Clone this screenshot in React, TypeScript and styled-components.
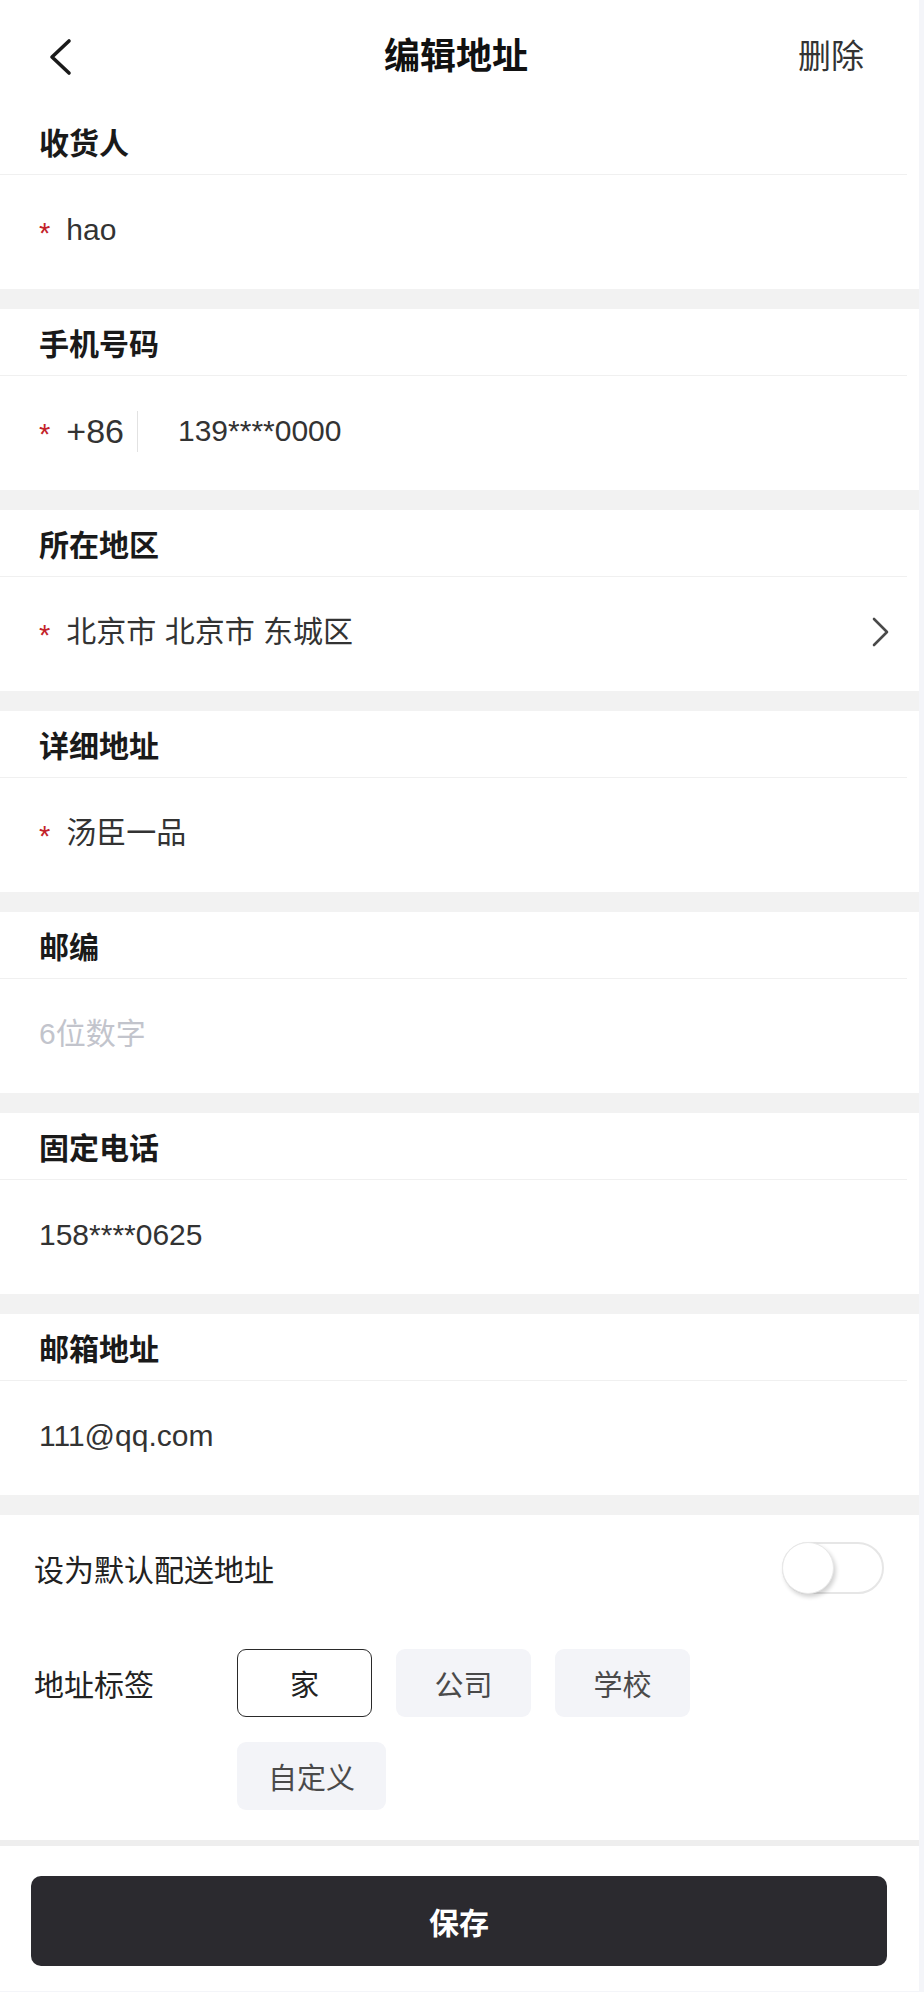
import React from "react";
import styled, { createGlobalStyle } from "styled-components";

type Field = {
  label: string;
  value: string;
  required?: boolean;
  placeholder?: boolean;
  areaCode?: string;
  arrow?: boolean;
};

const fields: Field[] = [
  { label: "收货人", value: "hao", required: true },
  { label: "手机号码", value: "139****0000", required: true, areaCode: "+86" },
  { label: "所在地区", value: "北京市 北京市 东城区", required: true, arrow: true },
  { label: "详细地址", value: "汤臣一品", required: true },
  { label: "邮编", value: "6位数字", placeholder: true },
  { label: "固定电话", value: "158****0625" },
  { label: "邮箱地址", value: "111@qq.com" },
];

const tags = ["家", "公司", "学校", "自定义"];

const App = () => {
  return (
    <>
      <GlobalStyle />
      <Page>
        <Header>
          <BackButton>
            <svg width="26" height="40" viewBox="0 0 26 40">
              <polyline
                points="21,4 4,20 21,36"
                fill="none"
                stroke="#1a1a1a"
                strokeWidth="3.6"
                strokeLinecap="round"
                strokeLinejoin="round"
              />
            </svg>
          </BackButton>
          <Title>编辑地址</Title>
          <DeleteText>删除</DeleteText>
        </Header>

        {fields.map((f) => (
          <FieldSection key={f.label}>
            <FieldLabel>{f.label}</FieldLabel>
            <FieldRow>
              {f.required && <Asterisk>*</Asterisk>}
              {f.areaCode && <AreaCode>{f.areaCode}</AreaCode>}
              <ValueText $placeholder={f.placeholder}>{f.value}</ValueText>
              {f.arrow && (
                <svg width="20" height="32" viewBox="0 0 20 32">
                  <polyline
                    points="3,3 16,16 3,29"
                    fill="none"
                    stroke="#4a4a4a"
                    strokeWidth="2.6"
                    strokeLinecap="round"
                    strokeLinejoin="round"
                  />
                </svg>
              )}
            </FieldRow>
          </FieldSection>
        ))}

        <SettingsBlock>
          <SwitchRow>
            <SettingText>设为默认配送地址</SettingText>
            <Toggle>
              <Knob />
            </Toggle>
          </SwitchRow>
          <TagRow>
            <TagLabel>地址标签</TagLabel>
            <TagGrid>
              {tags.map((t, i) => (
                <Tag key={t} $active={i === 0}>
                  {t}
                </Tag>
              ))}
            </TagGrid>
          </TagRow>
        </SettingsBlock>

        <Footer>
          <SaveButton>保存</SaveButton>
        </Footer>
      </Page>
    </>
  );
};

export default App;

const GlobalStyle = createGlobalStyle`
  html, body {
    margin: 0;
    padding: 0;
    background: #f4f5f9;
  }
  body {
    font-family: "Liberation Sans", "Noto Sans CJK SC", sans-serif;
    -webkit-font-smoothing: antialiased;
  }
`;

const Page = styled.div`
  width: 919px;
  background: #f2f2f2;
  display: flex;
  flex-direction: column;
`;

const Header = styled.div`
  height: 108px;
  box-sizing: border-box;
  padding: 5px 55px 0 48px;
  background: #ffffff;
  display: grid;
  grid-template-columns: 1fr auto 1fr;
  align-items: center;
`;

const BackButton = styled.div`
  justify-self: start;
  display: flex;
  align-items: center;
`;

const Title = styled.div`
  font-size: 36px;
  font-weight: 700;
  color: #111111;
  line-height: 1.2;
`;

const DeleteText = styled.div`
  justify-self: end;
  font-size: 33px;
  color: #333333;
  line-height: 1.2;
`;

const FieldSection = styled.div`
  background: #ffffff;
  margin-bottom: 20px;
`;

const FieldLabel = styled.div`
  height: 66px;
  margin-right: 12px;
  padding-left: 39px;
  border-bottom: 1px solid #f0f0f0;
  display: flex;
  align-items: center;
  font-size: 30px;
  font-weight: 700;
  color: #1a1a1a;
`;

const FieldRow = styled.div`
  height: 114px;
  box-sizing: border-box;
  padding: 0 28px 4px 39px;
  display: flex;
  align-items: center;
`;

const Asterisk = styled.span`
  font-size: 29px;
  color: #c3222a;
  margin-right: 16px;
  line-height: 1;
  align-self: center;
  margin-top: 6px;
`;

const AreaCode = styled.span`
  font-size: 34px;
  color: #333333;
  line-height: 41px;
  padding-right: 13px;
  border-right: 1px solid #e2e2e2;
  margin-right: 40px;
`;

const ValueText = styled.span<{ $placeholder?: boolean }>`
  flex: 1;
  font-size: 30px;
  line-height: 1.2;
  color: ${(p) => (p.$placeholder ? "#c2c4cc" : "#333333")};
`;

const SettingsBlock = styled.div`
  background: #ffffff;
  padding: 27px 35px 30px 34px;
`;

const SwitchRow = styled.div`
  display: flex;
  justify-content: space-between;
  align-items: center;
  height: 52px;
`;

const SettingText = styled.span`
  font-size: 30px;
  color: #222222;
`;

const Toggle = styled.div`
  width: 102px;
  height: 52px;
  box-sizing: border-box;
  border: 2px solid #e6e6e6;
  border-radius: 26px;
  background: #ffffff;
  display: flex;
  align-items: center;
`;

const Knob = styled.div`
  width: 52px;
  height: 52px;
  margin-left: -2px;
  box-sizing: border-box;
  border-radius: 50%;
  border: 1px solid #e8e8e8;
  background: #ffffff;
  box-shadow: 2px 3px 4px rgba(0, 0, 0, 0.18);
`;

const TagRow = styled.div`
  display: flex;
  margin-top: 55px;
`;

const TagLabel = styled.div`
  width: 203px;
  height: 68px;
  flex-shrink: 0;
  display: flex;
  align-items: center;
  font-size: 30px;
  color: #222222;
`;

const TagGrid = styled.div`
  display: flex;
  flex-wrap: wrap;
  gap: 25px 24px;
  max-width: 480px;
`;

const Tag = styled.div<{ $active?: boolean }>`
  min-width: 135px;
  height: 68px;
  padding: 0 30px;
  box-sizing: border-box;
  border-radius: 9px;
  border: 1px solid ${(p) => (p.$active ? "#2a2a2a" : "transparent")};
  background: ${(p) => (p.$active ? "#ffffff" : "#f3f4f8")};
  color: ${(p) => (p.$active ? "#222222" : "#4a4a4a")};
  font-size: 29px;
  display: flex;
  align-items: center;
  justify-content: center;
`;

const Footer = styled.div`
  border-top: 6px solid #eeeeee;
  background: #ffffff;
  padding: 30px 32px 25px 31px;
`;

const SaveButton = styled.div`
  height: 90px;
  border-radius: 10px;
  background: #2b2a2f;
  color: #ffffff;
  font-size: 30px;
  font-weight: 600;
  display: flex;
  align-items: center;
  justify-content: center;
`;
